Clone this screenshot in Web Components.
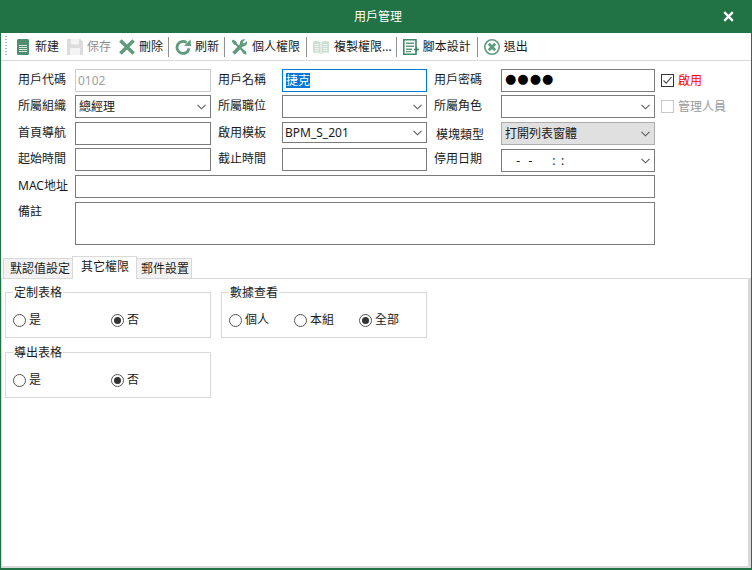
<!DOCTYPE html>
<html lang="zh-Hant"><head><meta charset="utf-8"><title>用戶管理</title>
<style>
html,body{margin:0;padding:0;background:#fff}
body{font:12px/16px "Noto Sans","Noto Sans CJK TC",sans-serif;color:#1a1a1a}
</style></head><body>
<x-window>
  <x-titlebar>用戶管理</x-titlebar>
  <x-toolbar>
    <x-tool icon="new">新建</x-tool>
    <x-tool icon="save" disabled>保存</x-tool>
    <x-tool icon="del">刪除</x-tool>
    <x-sep></x-sep>
    <x-tool icon="refresh">刷新</x-tool>
    <x-sep></x-sep>
    <x-tool icon="tools" style="--g:5px;--m:9px">個人權限</x-tool>
    <x-sep></x-sep>
    <x-tool icon="copy" style="--g:5px;--m:7px">複製權限...</x-tool>
    <x-sep></x-sep>
    <x-tool icon="script" style="--m:9px">腳本設計</x-tool>
    <x-sep></x-sep>
    <x-tool icon="exit">退出</x-tool>
  </x-toolbar>
  <x-form>
    <x-label>用戶代碼</x-label><x-field disabled style="padding-left:2px">0102</x-field>
    <x-label indent>用戶名稱</x-label><x-field focused><span class="sel">捷克</span></x-field>
    <x-label indent>用戶密碼</x-label><x-field dots>●●●●</x-field>
    <x-check checked red>啟用</x-check>

    <x-label>所屬組織</x-label><x-field select>總經理</x-field>
    <x-label indent>所屬職位</x-label><x-field select></x-field>
    <x-label indent>所屬角色</x-label><x-field select></x-field>
    <x-check disabled>管理人員</x-check>

    <x-label>首頁導航</x-label><x-field></x-field>
    <x-label indent>啟用模板</x-label><x-field select short style="padding-left:2px">BPM_S_201</x-field>
    <x-label indent nudge>模塊類型</x-label><x-field select locked>打開列表窗體</x-field>
    <span></span>

    <x-label>起始時間</x-label><x-field></x-field>
    <x-label indent>截止時間</x-label><x-field></x-field>
    <x-label indent>停用日期</x-label><x-field select lower date>    -   -       :  :</x-field>
    <span></span>

    <x-label>MAC地址</x-label><x-field style="grid-column:2 / 7"></x-field>
    <span></span>

    <x-label top>備註</x-label><x-field style="grid-column:2 / 7;height:43px"></x-field>
  </x-form>
  <x-tabs>
    <x-tab slot="tabs" style="--pl:6px;--w:70px">默認值設定</x-tab>
    <x-tab slot="tabs" active style="--pl:8px;--w:65px">其它權限</x-tab>
    <x-tab slot="tabs" style="--pl:4px;--w:56px">郵件設置</x-tab>
    <x-panel>
      <x-group legend="定制表格" step="98"><x-radio>是</x-radio><x-radio checked>否</x-radio></x-group>
      <x-group legend="數據查看" step="65"><x-radio>個人</x-radio><x-radio>本組</x-radio><x-radio checked>全部</x-radio></x-group>
      <x-group legend="導出表格" step="98"><x-radio>是</x-radio><x-radio checked>否</x-radio></x-group>
    </x-panel>
  </x-tabs>
</x-window>
<script>
function def(name, css, html, setup){
  customElements.define(name, class extends HTMLElement{
    connectedCallback(){
      if(this.shadowRoot) return;
      const r=this.attachShadow({mode:'open'});
      r.innerHTML='<style>'+css+'</style>'+(typeof html==='function'?html(this):html);
      if(setup) setup(this,r);
    }
  });
}
const G='#5f9c7e', GD='#3f8a66';
const ICONS={
 new:`<path d="M2 1.5Q2 0 3.5 0H12.5Q14 0 14 1.5V14.5Q14 16 12.5 16H3.5Q2 16 2 14.5Z" fill="#4f8f6f"/><path d="M4 6.5H12M4 8.5H12M4 10.5H12M4 12.5H12" stroke="#d6e6dd" stroke-width="1"/>`,
 save:`<path d="M0 0H13.5L16 2.5V16H0Z" fill="#dcdcdc"/><rect x="4" y="0" width="8" height="5.5" fill="#f4f4f4"/><rect x="3" y="9" width="10" height="7" fill="#f4f4f4"/>`,
 del:`<path d="M1.4 1.4L14.6 14.6M14.6 1.4L1.4 14.6" stroke="${G}" stroke-width="3.6" fill="none"/>`,
 refresh:`<path d="M14 9.2A6 6 0 1 1 11.6 3.6" stroke="${G}" stroke-width="2.8" fill="none"/><path d="M9 6.8L16 7L15.6 0.4Z" fill="${G}"/>`,
 tools:`<path d="M2.6 14.4L10.6 6" stroke="${G}" stroke-width="3.6" fill="none"/><path d="M9 5A4 4 0 0 1 14.2 0.4L11.6 3.2L13 4.8L15.8 2A4 4 0 0 1 11.2 7.4Z" fill="${G}"/><path d="M0.6 2L2.2 0.4L5.6 3L5.8 4.6L9 7.6L7.6 9L4.6 6L3 5.8Z" fill="${G}"/><path d="M8.6 9.6L10 8.2L15 12.8L15.6 15.6L12.8 15Z" fill="${G}"/>`,
 copy:`<path d="M0 2.5Q4 1 7.6 3.4V15Q4 12.8 0 14Z M8.4 3.4Q12 1 16 2.5V14Q12 12.8 8.4 15Z" fill="#cddfd5"/><path d="M1.8 5.5H6M1.8 7.5H6M1.8 9.5H6M1.8 11.5H6M10 5.5H14.2M10 7.5H14.2M10 9.5H14.2M10 11.5H14.2" stroke="#eef4f0"/>`,
 script:`<path d="M0.8 0.8H13V15.2H0.8Z" fill="#fff" stroke="${GD}" stroke-width="1.6"/><path d="M3 3.5H11V5H3ZM3 6.5H11V8H3ZM3 9.5H9V11H3ZM3 12H8V13.2H3Z" fill="${G}"/><path d="M11 10.5H16M13.5 8V13" stroke="${GD}" stroke-width="1.4"/>`,
 exit:`<circle cx="8" cy="8" r="7.2" fill="none" stroke="${G}" stroke-width="1.6"/><path d="M4.8 4.8L11.2 11.2M11.2 4.8L4.8 11.2" stroke="${G}" stroke-width="2.8"/>`
};
def('x-window',`:host{display:flex;flex-direction:column;box-sizing:border-box;width:752px;height:570px;border:solid #217346;border-width:0 1px 2px 1px;background:#fff;overflow:hidden}`,`<slot></slot>`);
def('x-titlebar',`:host{display:flex;align-items:center;justify-content:center;position:relative;box-sizing:border-box;height:33px;margin:0 -1px;padding-left:4px;background:#217346;color:#fff;flex:none}
 svg{position:absolute;right:18px;top:11px}`,`<slot></slot><svg width="11" height="11" viewBox="0 0 11 11"><path d="M1.2 1.2L9.8 9.8M9.8 1.2L1.2 9.8" stroke="#fff" stroke-width="2.4"/></svg>`);
def('x-toolbar',`:host{display:flex;align-items:center;height:27px;border-bottom:1px solid #d9d9d9;flex:none;padding-left:4px}
 i{display:block;width:2px;height:21px;margin-right:8px;background:repeating-linear-gradient(#b5b5b5 0 1px,transparent 1px 3px)}`,`<i></i><slot></slot>`);
def('x-tool',`:host{display:flex;align-items:center;gap:var(--g,4px);margin-right:var(--m,8px);white-space:nowrap}
 :host([disabled]){color:#8c8c8c;}svg{display:block;flex:none}`,
 t=>`<svg width="16" height="16" viewBox="0 0 16 16">${ICONS[t.getAttribute('icon')]}</svg><slot></slot>`);
def('x-sep',`:host{display:block;width:1px;height:20px;background:#8f8f8f;margin:0 6px 0 -3px}`,``);
def('x-form',`:host{display:grid;flex:none;grid-template-columns:57px 136px 71px 145px 74px 154px auto;grid-template-rows:26px 27px 26px 27px 27px 43px;padding:8px 0 0 17px;align-items:start}`,`<slot></slot>`);
def('x-label',`:host{display:flex;align-items:center;height:21px;white-space:nowrap}
 :host([indent]){padding-left:7px}:host([nudge]){padding-left:9px;margin-top:2px}:host([top]){height:19px}`,`<slot></slot>`);
def('x-field',`:host{display:flex;align-items:center;box-sizing:border-box;height:23px;border:1px solid #7a7a7a;padding:0 3px;background:#fff;white-space:pre;position:relative;overflow:hidden}
 :host([disabled]){border-color:#cccccc;color:#a0a0a0}
 :host([focused]){border-color:#0078d7}
 :host([short]){height:21px}
 :host([locked]){background:#e0e0e0;border-color:#adadad}
 :host([lower]){margin-top:1px}
 :host([date]){word-spacing:-.3px}
 :host([dots]){font:13px/16px "DejaVu Sans",sans-serif;letter-spacing:1px;color:#000;padding-bottom:4px}
 svg{position:absolute;right:4px;top:50%;margin-top:-3px}`,
 t=>`<slot></slot>`+(t.hasAttribute('select')?`<svg width="9" height="6" viewBox="0 0 9 6"><path d="M0.5 0.8L4.5 4.8L8.5 0.8" fill="none" stroke="#5a5a5a" stroke-width="1.1"/></svg>`:''),
 (t,r)=>{const s=t.querySelector('.sel'); if(s){s.style.cssText='background:#0078d7;color:#fff;display:inline-block;line-height:15px';}});
def('x-check',`:host{display:flex;align-items:center;gap:4px;height:23px;margin-left:6px;white-space:nowrap}
 :host([red]){color:#f00}:host([disabled]){color:#9a9a9a}
 b{display:flex;box-sizing:border-box;width:13px;height:13px;border:1px solid #333;background:#fff}
 :host([disabled]) b{border-color:#c8c8c8}svg{display:block}`,
 t=>`<b>${t.hasAttribute('checked')?'<svg width="11" height="11" viewBox="0 0 11 11"><path d="M1.5 5.5L4.2 8.2L9.5 2.2" fill="none" stroke="#555" stroke-width="1.2"/></svg>':''}</b><slot></slot>`);
def('x-tabs',`:host{display:flex;flex-direction:column;flex:1;min-height:0;margin-top:11px}
 .h{display:flex;align-items:flex-end;height:22px;padding-left:2px;position:relative;z-index:1}`,
 `<div class="h"><slot name="tabs"></slot></div><slot></slot>`);
def('x-tab',`:host{display:flex;align-items:center;box-sizing:border-box;width:var(--w);height:20px;padding:0 0 0 var(--pl);background:#f2f2f2;border:1px solid #d9d9d9;border-bottom:0;margin-left:-1px;white-space:nowrap}
 :host(:first-child){margin-left:0}
 :host([active]){height:23px;margin-bottom:-1px;background:#fff;padding-bottom:3px;z-index:1}`,`<slot></slot>`);
def('x-panel',`:host{display:grid;grid-template-columns:206px 206px;grid-template-rows:46px 46px;gap:14px 10px;align-content:start;flex:1;min-height:0;border:solid #d9d9d9;border-width:1px 3px 2px 1px;padding:13px 0 0 3px}`,`<slot></slot>`);
def('x-group',`:host{display:grid;position:relative;box-sizing:border-box;border:1px solid #d9d9d9;padding:20px 0 0 7px;align-items:start;justify-content:start}
 .l{position:absolute;left:7px;top:-8px;background:#fff;padding:0 1px;line-height:16px}`,
 t=>`<div class="l">${t.getAttribute('legend')}</div><slot></slot>`,
 (t,r)=>{const n=t.children.length;t.style.gridTemplateColumns=`repeat(${n},${t.getAttribute('step')}px)`;});
def('x-radio',`:host{display:flex;align-items:center;gap:3px;height:14px;white-space:nowrap}
 b{display:flex;align-items:center;justify-content:center;box-sizing:border-box;width:13px;height:13px;border:1px solid #555;border-radius:50%;background:#fff}
 u{display:block;width:7px;height:7px;border-radius:50%;background:#333}`,
 t=>`<b>${t.hasAttribute('checked')?'<u></u>':''}</b><slot></slot>`);
</script>
</body></html>
